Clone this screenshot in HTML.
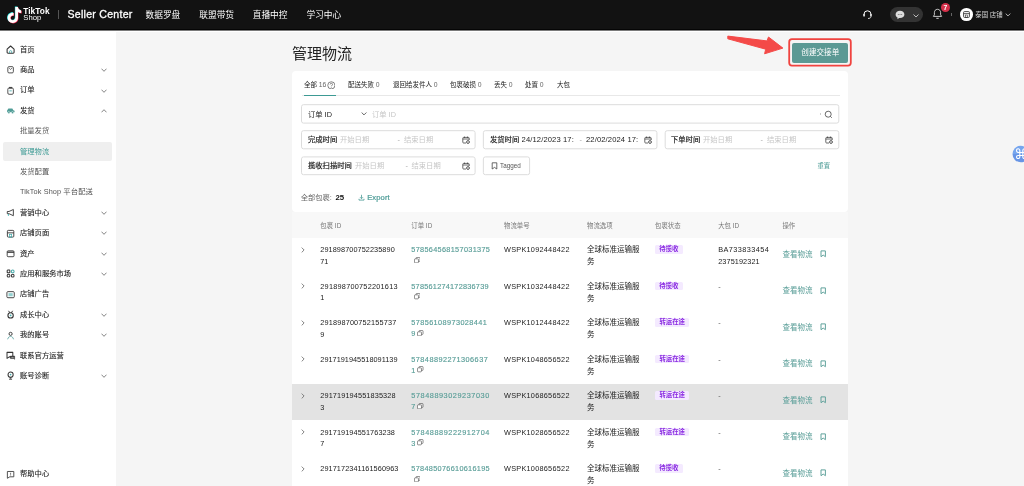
<!DOCTYPE html>
<html lang="zh">
<head>
<meta charset="utf-8">
<title>管理物流</title>
<style>
*{box-sizing:border-box;margin:0;padding:0}
html,body{width:1024px;height:486px;overflow:hidden;background:#f5f5f5}
body{font-family:"Liberation Sans","Noto Sans CJK SC",sans-serif;color:#222;position:relative;font-size:7.3px;line-height:1}
.abs{position:absolute;white-space:nowrap}
#app{position:absolute;left:0;top:0;width:1024px;height:486px;overflow:hidden;will-change:transform}
#hdr{position:absolute;left:0;top:0;width:1024px;height:30px;background:#121212;border-bottom:1px solid #050505}
#hdrsh{position:absolute;left:0;top:30px;width:1024px;height:2px;background:#fff;border-top:1px solid #7a7a7a}
#side{position:absolute;left:0;top:30px;width:116px;height:456px;background:#fff}
.nav{position:absolute;top:0.5px;height:30px;line-height:29px;color:#fff;font-size:8.7px;white-space:nowrap}
.mi{position:absolute;left:20px;height:12px;line-height:12px;font-size:7.3px;color:#1a1a1a;white-space:nowrap;-webkit-text-stroke:.1px #1a1a1a}
.mi.sub{color:#555;-webkit-text-stroke:0}
.ico{position:absolute;left:6.4px;width:9.2px;height:9.2px}
.chev{position:absolute;left:100.5px;width:6px;height:4px}
#card{position:absolute;left:292px;top:71px;width:556px;height:141px;background:#fff;border-radius:4px}
.tab{position:absolute;top:79px;height:12px;line-height:12px;font-size:6.5px;color:#222;white-space:nowrap}
.tab i{font-style:normal;color:#666;font-size:6.8px}
.box{position:absolute;height:19px;border:1px solid transparent}
.lbl{position:absolute;top:0;height:17px;line-height:17px;font-size:7.3px;white-space:nowrap;color:#222}
.ph{color:#c6c6c6}
.th{position:absolute;top:220px;height:12px;line-height:12px;font-size:6.4px;color:#777;white-space:nowrap}
.row{position:absolute;left:292px;width:556px;background:#fff}
.row.hl{background:#e3e3e3}
.c{position:absolute;font-size:7.3px;line-height:11.7px;color:#222;white-space:nowrap}
.c span{display:inline-block}
.lnk{color:#5a9e98}
.tag{position:absolute;height:8.6px;line-height:8.6px;border-radius:1.5px;background:#f4eaff;color:#8a2be2;font-size:6.4px;font-weight:700;text-align:center;white-space:nowrap}
</style>
</head>
<body>
<div id="app">
<div id="side"></div>
<div id="hdr"></div>
<div id="hdrsh"></div>
<!-- header -->
<svg class="abs" style="left:6px;top:5.700px" width="17" height="19" viewBox="0 0 17 19"><path d="M9.3 1h2.6c.2 1.9 1.4 3.2 3.3 3.4v2.700c-1.200 0-2.300-.4-3.200-1v5.700c0 3-2.400 5.200-5.200 5.200s-5.200-2.300-5.200-5.200 2.600-5.500 5.900-5.100v2.800c-1.600-.4-3.100.7-3.100 2.300 0 1.400 1.100 2.400 2.400 2.400s2.500-1 2.500-2.600z" fill="#25f4ee" transform="translate(-.45,-.4)"/><path d="M9.3 1h2.6c.2 1.9 1.4 3.2 3.3 3.4v2.700c-1.200 0-2.300-.4-3.200-1v5.700c0 3-2.400 5.200-5.200 5.200s-5.200-2.300-5.200-5.200 2.600-5.500 5.900-5.100v2.800c-1.600-.4-3.100.7-3.100 2.300 0 1.400 1.100 2.400 2.400 2.400s2.500-1 2.500-2.600z" fill="#fe2c55" transform="translate(.45,.4)"/><path d="M9.3 1h2.6c.2 1.9 1.4 3.2 3.3 3.4v2.700c-1.200 0-2.300-.4-3.200-1v5.700c0 3-2.400 5.200-5.200 5.200s-5.200-2.300-5.200-5.200 2.600-5.500 5.900-5.100v2.800c-1.600-.4-3.100.7-3.100 2.300 0 1.400 1.100 2.400 2.400 2.400s2.500-1 2.500-2.600z" fill="#fff"/></svg>
<div class="abs" style="left:23.300px;top:7.100px;font-size:8.300px;font-weight:700;color:#fff;line-height:8px;letter-spacing:.05px">TikTok</div>
<div class="abs" style="left:23.300px;top:14.300px;font-size:7.700px;color:#fff;line-height:8px">Shop</div>
<div class="abs" style="left:58px;top:10px;width:1px;height:9px;background:#555"></div>
<div class="nav" style="left:67.500px;top:-.5px;font-size:10.600px;letter-spacing:.25px;-webkit-text-stroke:.3px #fff">Seller Center</div>
<div class="nav" style="left:145.5px">数据罗盘</div>
<div class="nav" style="left:199.3px">联盟带货</div>
<div class="nav" style="left:252.7px">直播中控</div>
<div class="nav" style="left:306.4px">学习中心</div>
<!-- header right -->
<svg class="abs" style="left:862px;top:9px" width="11" height="11" viewBox="0 0 11 11"><path d="M2 6.200V5.300a3.500 3.500 0 0 1 7 0v.9" fill="none" stroke="#fff" stroke-width="1"/><rect x="1.300" y="5" width="1.500" height="2.600" rx=".7" fill="#fff"/><rect x="8.200" y="5" width="1.500" height="2.600" rx=".7" fill="#fff"/><path d="M9 7.500c0 1.300-1.300 2-3 2" fill="none" stroke="#fff" stroke-width=".8"/></svg>
<div class="abs" style="left:890px;top:7px;width:32.500px;height:15px;border-radius:7.500px;background:#333"></div>
<svg class="abs" style="left:894.500px;top:9.500px" width="10" height="10" viewBox="0 0 10 10"><path d="M5 .8c2.500 0 4.400 1.600 4.400 3.600S7.500 8 5 8c-.3 0-.6 0-.9-.1L2.500 9.200V7.400C1.300 6.700.6 5.600.6 4.400.6 2.400 2.500.8 5 .8z" fill="#ddd"/><circle cx="3.300" cy="4.400" r=".5" fill="#666"/><circle cx="5" cy="4.400" r=".5" fill="#666"/><circle cx="6.700" cy="4.400" r=".5" fill="#666"/></svg>
<svg class="abs" style="left:912.500px;top:13.500px" width="6" height="4" viewBox="0 0 6 4"><path d="M.5.500 3 3 5.500.5" fill="none" stroke="#ddd" stroke-width=".8"/></svg>
<svg class="abs" style="left:932px;top:8px" width="11" height="12" viewBox="0 0 11 12"><path d="M5.500 1.300c2 0 3.100 1.500 3.100 3.300v2.200l1 1.600H1.400l1-1.600V4.600c0-1.800 1.100-3.300 3.100-3.300z" fill="none" stroke="#e6e6e6" stroke-width=".85" stroke-linejoin="round"/><path d="M4.300 10.300h2.400" stroke="#e6e6e6" stroke-width=".9"/></svg>
<div class="abs" style="left:940.800px;top:2.900px;width:9.200px;height:9.200px;border-radius:4.600px;background:#d4304a;color:#fff;font-size:6.800px;font-weight:700;line-height:9.200px;text-align:center">7</div>
<div class="abs" style="left:951px;top:12.500px;width:1px;height:3px;background:#666"></div>
<div class="abs" style="left:960px;top:8px;width:12.500px;height:12.500px;border-radius:6.300px;background:#fff"></div>
<svg class="abs" style="left:962.700px;top:10.700px" width="7" height="7" viewBox="0 0 7 7"><rect x=".6" y=".6" width="5.800" height="5.800" rx=".8" fill="none" stroke="#333" stroke-width=".9"/><path d="M.6 2.600h5.800" stroke="#333" stroke-width=".8"/><rect x="2.500" y="4" width="2" height="2.400" fill="none" stroke="#333" stroke-width=".6"/></svg>
<div class="abs" style="left:975.300px;top:9px;height:11px;line-height:11px;font-size:6.400px;color:#d4d4d4">泰国 店铺</div>
<svg class="abs" style="left:1005px;top:13px" width="6" height="4" viewBox="0 0 6 4"><path d="M.7.600 3 2.900 5.300.6" fill="none" stroke="#ddd" stroke-width=".8"/></svg>
<!-- floating widget -->
<svg class="abs" style="left:1010px;top:143px" width="14" height="22" viewBox="1010 143 14 22"><defs><linearGradient id="wg" x1="0" y1="0" x2="0" y2="1"><stop offset=".5" stop-color="#76a5ee"/><stop offset=".5" stop-color="#6795e6"/></linearGradient></defs><circle cx="1020.750" cy="154.050" r="8.250" fill="url(#wg)"/><text x="1014.300" y="158.900" font-family="DejaVu Sans, sans-serif" font-size="14" fill="#fff">&#8984;</text></svg>
<!-- title -->
<div class="abs" style="left:292px;top:43.600px;height:20px;line-height:20px;font-size:15px;color:#222">管理物流</div>
<!-- arrow + button -->
<svg class="abs" style="left:720px;top:30px" width="80" height="38" viewBox="720 30 80 38"><path d="M727.800 36.100 766.900 40.900 768.500 37 782.900 48.100 764.600 53.800 765.700 49.200 727.800 38.800z" fill="#f44a48" stroke="#f44a48" stroke-width="1" stroke-linejoin="round"/></svg>
<svg class="abs" style="left:786px;top:36px" width="68" height="33" viewBox="786 36 68 33"><rect x="789.200" y="39.100" width="61.600" height="26.500" rx="2.800" fill="none" stroke="#f0433f" stroke-width="1.800"/></svg>
<div class="abs" style="left:792.300px;top:43.300px;width:56px;height:19.300px;border-radius:2px;background:#5b9994;color:#fff;font-size:7.600px;line-height:19.300px;text-align:center">创建交接单</div>
<!-- card -->
<div id="card"></div>
<div class="abs" style="left:301.500px;top:95.300px;width:538px;height:1px;background:#e8e8e8"></div>
<div class="abs" style="left:304px;top:94.700px;width:31.500px;height:1.200px;background:#3d9a94"></div>
<div class="tab" style="left:304px">全部 <i>16</i></div>
<svg class="abs" style="left:326.800px;top:80.700px" width="8.700" height="8.700" viewBox="0 0 8 8"><circle cx="4" cy="4" r="3.300" fill="none" stroke="#444" stroke-width=".6"/><path d="M2.900 3.200c0-1.500 2.200-1.500 2.200 0 0 .8-1.100.8-1.100 1.700M4 5.600v.6" fill="none" stroke="#444" stroke-width=".6"/></svg>
<div class="tab" style="left:348px">配送失败 <i>0</i></div>
<div class="tab" style="left:393px">退回给发件人 <i>0</i></div>
<div class="tab" style="left:450px">包裹破损 <i>0</i></div>
<div class="tab" style="left:494px">丢失 <i>0</i></div>
<div class="tab" style="left:525px">处置 <i>0</i></div>
<div class="tab" style="left:557px">大包</div>
<!-- search -->
<svg class="abs" style="left:0;top:0" width="1024" height="486" viewBox="0 0 1024 486"><g fill="#fff" stroke="#dcdcdc" stroke-width="1"><rect x="301.50" y="104.70" width="537.30" height="18.40" rx="2"/><rect x="301.50" y="130.70" width="173.60" height="18.10" rx="2"/><rect x="483.35" y="130.70" width="173.60" height="18.10" rx="2"/><rect x="665.20" y="130.70" width="173.60" height="18.10" rx="2"/><rect x="301.50" y="156.90" width="173.60" height="17.80" rx="2"/><rect x="483.35" y="156.90" width="46.25" height="17.80" rx="2"/></g></svg>
<div class="box" style="left:301px;top:104px;width:538px;height:20px">
  <div class="lbl" style="left:6px;height:18px;line-height:20px">订单 ID</div>
  <svg class="abs" style="left:58.500px;top:7px" width="6" height="4" viewBox="0 0 6 4"><path d="M.6.500 3 2.900 5.400.5" fill="none" stroke="#444" stroke-width=".8"/></svg>
  <div class="lbl ph" style="left:70px;height:18px;line-height:20px">订单 ID</div>
  <div class="abs" style="left:517.500px;top:7.500px;width:1px;height:2px;background:#ccc"></div>
  <svg class="abs" style="left:521.500px;top:4.500px" width="9" height="9" viewBox="0 0 9 9"><circle cx="4.200" cy="4.200" r="3" fill="none" stroke="#444" stroke-width=".8"/><path d="M6.400 6.400 7.800 7.800" stroke="#444" stroke-width=".8"/></svg>
</div>
<!-- filters -->
<div class="box" style="left:301px;top:130px;width:175px">
  <div class="lbl" style="left:6px;-webkit-text-stroke:.2px #222">完成时间</div>
  <div class="lbl ph" style="left:38px">开始日期</div>
  <div class="lbl" style="left:95.5px;color:#aaa">-</div>
  <div class="lbl ph" style="left:102px;">结束日期</div>
  <svg class="abs" style="left:159.5px;top:5px" width="8" height="8" viewBox="0 0 8 8"><path d="M4 7H1.600a.8.8 0 0 1-.8-.8V2.200a.8.8 0 0 1 .8-.8h4.800a.8.8 0 0 1 .8.800V4" fill="none" stroke="#444" stroke-width=".8"/><path d="M.8 3h6.400M2.500.6v1.400M5.500.6v1.400" stroke="#444" stroke-width=".8"/><circle cx="6" cy="6" r="1.400" fill="none" stroke="#444" stroke-width=".9"/></svg>
</div>
<div class="box" style="left:483px;top:130px;width:174px">
  <div class="lbl" style="left:6px;-webkit-text-stroke:.2px #222">发货时间</div>
  <div class="lbl" style="left:37.6px;width:52.300px;overflow:hidden;font-size:7.600px;letter-spacing:.12px">24/12/2023 17:00</div>
  <div class="lbl" style="left:95.5px;color:#aaa">-</div>
  <div class="lbl" style="left:102px;font-size:7.600px;letter-spacing:.12px">22/02/2024 17:</div>
  <svg class="abs" style="left:159.5px;top:5px" width="8" height="8" viewBox="0 0 8 8"><path d="M4 7H1.600a.8.8 0 0 1-.8-.8V2.200a.8.8 0 0 1 .8-.8h4.800a.8.8 0 0 1 .8.800V4" fill="none" stroke="#444" stroke-width=".8"/><path d="M.8 3h6.400M2.500.6v1.400M5.500.6v1.400" stroke="#444" stroke-width=".8"/><circle cx="6" cy="6" r="1.400" fill="none" stroke="#444" stroke-width=".9"/></svg>
</div>
<div class="box" style="left:664px;top:130px;width:175px">
  <div class="lbl" style="left:6px;-webkit-text-stroke:.2px #222">下单时间</div>
  <div class="lbl ph" style="left:38px">开始日期</div>
  <div class="lbl" style="left:95.5px;color:#aaa">-</div>
  <div class="lbl ph" style="left:102px;">结束日期</div>
  <svg class="abs" style="left:159.5px;top:5px" width="8" height="8" viewBox="0 0 8 8"><path d="M4 7H1.600a.8.8 0 0 1-.8-.8V2.200a.8.8 0 0 1 .8-.8h4.800a.8.8 0 0 1 .8.800V4" fill="none" stroke="#444" stroke-width=".8"/><path d="M.8 3h6.400M2.500.6v1.400M5.500.6v1.400" stroke="#444" stroke-width=".8"/><circle cx="6" cy="6" r="1.400" fill="none" stroke="#444" stroke-width=".9"/></svg>
</div>
<div class="box" style="left:301px;top:156px;width:175px">
  <div class="lbl" style="left:6px;-webkit-text-stroke:.2px #222">揽收扫描时间</div>
  <div class="lbl ph" style="left:53px">开始日期</div>
  <div class="lbl" style="left:103.5px;color:#aaa">-</div>
  <div class="lbl ph" style="left:109.5px;">结束日期</div>
  <svg class="abs" style="left:159.5px;top:5px" width="8" height="8" viewBox="0 0 8 8"><path d="M4 7H1.600a.8.8 0 0 1-.8-.8V2.200a.8.8 0 0 1 .8-.8h4.800a.8.8 0 0 1 .8.800V4" fill="none" stroke="#444" stroke-width=".8"/><path d="M.8 3h6.400M2.500.6v1.400M5.500.6v1.400" stroke="#444" stroke-width=".8"/><circle cx="6" cy="6" r="1.400" fill="none" stroke="#444" stroke-width=".9"/></svg>
</div>
<div class="box" style="left:483px;top:156px;width:47px;height:19.500px">
  <svg class="abs" style="left:6.500px;top:5px" width="7" height="8" viewBox="0 0 7 8"><path d="M1.200.8h4.600v6.200L3.500 5.400 1.200 7z" fill="none" stroke="#444" stroke-width=".8" stroke-linejoin="round"/></svg>
  <div class="lbl" style="left:16px;font-size:6.300px;color:#555">Tagged</div>
</div>
<div class="abs" style="left:817.500px;top:160px;height:12px;line-height:12px;font-size:6.300px;color:#4a9a95">重置</div>
<div class="abs" style="left:300.700px;top:192px;height:12px;line-height:12px;font-size:7.300px;color:#666">全部包裹: <b style="color:#111;font-size:7.800px;margin-left:1.500px">25</b></div>
<svg class="abs" style="left:357.500px;top:194.300px" width="7" height="7" viewBox="0 0 7 7"><path d="M3.500.8v3.600M2 3.200l1.500 1.500L5 3.200M1 4.800v1.300h5V4.800" fill="none" stroke="#4a9a95" stroke-width=".8"/></svg>
<div class="abs" style="left:367.200px;top:192px;height:12px;line-height:12px;font-size:7.600px;letter-spacing:.1px;color:#4a9a95;-webkit-text-stroke:.2px #4a9a95">Export</div>
<!-- table -->
<div class="abs" style="left:292px;top:212px;width:556px;height:26px;background:#f8f8f8"></div>
<div class="th" style="left:320.3px">包裹 ID</div>
<div class="th" style="left:411.3px">订单 ID</div>
<div class="th" style="left:504px">物流单号</div>
<div class="th" style="left:587.1px">物流选项</div>
<div class="th" style="left:655.1px">包裹状态</div>
<div class="th" style="left:718.2px">大包 ID</div>
<div class="th" style="left:782.4px">操作</div>
<div class="row" style="top:238px;height:36px"></div>
<svg class="abs" style="left:300.500px;top:246.9px" width="4" height="6" viewBox="0 0 4 6"><path d="M.7.600 3.100 3 .7 5.400" fill="none" stroke="#666" stroke-width=".8"/></svg><div class="c" style="left:320.300px;top:244.12px"><span style="letter-spacing:0.080px;">291898700752235890</span><br>71</div><div class="c lnk" style="left:411.300px;top:244.12px;line-height:11.300px;-webkit-text-stroke:.15px #5a9e98"><span style="letter-spacing:0.324px;">578564568157031375</span><br><svg style="display:inline-block;vertical-align:.3px;margin-left:2.5px" width="6.500" height="6.500" viewBox="0 0 7 7"><rect x=".5" y="2" width="4.300" height="4.300" rx=".8" fill="#fff" stroke="#555" stroke-width=".7"/><path d="M2.200 2V1.300a.8.8 0 0 1 .8-.8h2.700a.8.8 0 0 1 .8.800V4a.8.8 0 0 1-.8.800H4.800" fill="none" stroke="#555" stroke-width=".7"/></svg></div><div class="c" style="left:504px;top:244.12px"><span style="letter-spacing:0.259px;">WSPK1092448422</span></div><div class="c" style="left:587.100px;top:244.12px;font-size:7.500px;line-height:12px">全球标准运输服<br>务</div><div class="tag" style="left:655.100px;top:245.0px;width:27.7px">待揽收</div><div class="c" style="left:718.200px;top:244.12px;line-height:12px"><span style="letter-spacing:0.430px;">BA733833454</span><br><span style="letter-spacing:0.091px;">2375192321</span></div><div class="c lnk" style="left:782.500px;top:248.70px;font-size:7.500px">查看物流</div><svg class="abs" style="left:819.8px;top:250.1px" width="7" height="8" viewBox="0 0 7 8"><path d="M1 .9h4.400v5.800L3.200 5.100 1 6.700z" fill="none" stroke="#5a9e98" stroke-width=".95" stroke-linejoin="round"/></svg>
<div class="row" style="top:274px;height:37px"></div>
<svg class="abs" style="left:300.500px;top:283.4px" width="4" height="6" viewBox="0 0 4 6"><path d="M.7.600 3.100 3 .7 5.400" fill="none" stroke="#666" stroke-width=".8"/></svg><div class="c" style="left:320.300px;top:280.62px"><span style="letter-spacing:0.247px;">291898700752201613</span><br>1</div><div class="c lnk" style="left:411.300px;top:280.62px;line-height:11.300px;-webkit-text-stroke:.15px #5a9e98"><span style="letter-spacing:0.247px;">578561274172836739</span><br><svg style="display:inline-block;vertical-align:.3px;margin-left:2.5px" width="6.500" height="6.500" viewBox="0 0 7 7"><rect x=".5" y="2" width="4.300" height="4.300" rx=".8" fill="#fff" stroke="#555" stroke-width=".7"/><path d="M2.200 2V1.300a.8.8 0 0 1 .8-.8h2.700a.8.8 0 0 1 .8.800V4a.8.8 0 0 1-.8.800H4.800" fill="none" stroke="#555" stroke-width=".7"/></svg></div><div class="c" style="left:504px;top:280.62px"><span style="letter-spacing:0.259px;">WSPK1032448422</span></div><div class="c" style="left:587.100px;top:280.62px;font-size:7.500px;line-height:12px">全球标准运输服<br>务</div><div class="tag" style="left:655.100px;top:281.5px;width:27.7px">待揽收</div><div class="c" style="left:718.200px;top:280.62px;color:#555">-</div><div class="c lnk" style="left:782.500px;top:285.20px;font-size:7.500px">查看物流</div><svg class="abs" style="left:819.8px;top:286.6px" width="7" height="8" viewBox="0 0 7 8"><path d="M1 .9h4.400v5.800L3.200 5.100 1 6.700z" fill="none" stroke="#5a9e98" stroke-width=".95" stroke-linejoin="round"/></svg>
<div class="row" style="top:311px;height:36px"></div>
<svg class="abs" style="left:300.500px;top:319.9px" width="4" height="6" viewBox="0 0 4 6"><path d="M.7.600 3.100 3 .7 5.400" fill="none" stroke="#666" stroke-width=".8"/></svg><div class="c" style="left:320.300px;top:317.12px"><span style="letter-spacing:0.169px;">291898700752155737</span><br>9</div><div class="c lnk" style="left:411.300px;top:317.12px;line-height:11.300px;-webkit-text-stroke:.15px #5a9e98"><span style="letter-spacing:0.406px;">57856108973028441</span><br>9<svg style="display:inline-block;vertical-align:.3px;margin-left:2px" width="6.500" height="6.500" viewBox="0 0 7 7"><rect x=".5" y="2" width="4.300" height="4.300" rx=".8" fill="#fff" stroke="#555" stroke-width=".7"/><path d="M2.200 2V1.300a.8.8 0 0 1 .8-.8h2.700a.8.8 0 0 1 .8.800V4a.8.8 0 0 1-.8.800H4.800" fill="none" stroke="#555" stroke-width=".7"/></svg></div><div class="c" style="left:504px;top:317.12px"><span style="letter-spacing:0.259px;">WSPK1012448422</span></div><div class="c" style="left:587.100px;top:317.12px;font-size:7.500px;line-height:12px">全球标准运输服<br>务</div><div class="tag" style="left:655.100px;top:318.0px;width:34.2px">转运在途</div><div class="c" style="left:718.200px;top:317.12px;color:#555">-</div><div class="c lnk" style="left:782.500px;top:321.70px;font-size:7.500px">查看物流</div><svg class="abs" style="left:819.8px;top:323.1px" width="7" height="8" viewBox="0 0 7 8"><path d="M1 .9h4.400v5.800L3.200 5.100 1 6.700z" fill="none" stroke="#5a9e98" stroke-width=".95" stroke-linejoin="round"/></svg>
<div class="row" style="top:347px;height:37px"></div>
<svg class="abs" style="left:300.500px;top:356.4px" width="4" height="6" viewBox="0 0 4 6"><path d="M.7.600 3.100 3 .7 5.400" fill="none" stroke="#666" stroke-width=".8"/></svg><div class="c" style="left:320.300px;top:353.62px"><span style="letter-spacing:0.033px;">2917191945518091139</span></div><div class="c lnk" style="left:411.300px;top:353.62px;line-height:11.300px;-webkit-text-stroke:.15px #5a9e98"><span style="letter-spacing:0.465px;">57848892271306637</span><br>1<svg style="display:inline-block;vertical-align:.3px;margin-left:2px" width="6.500" height="6.500" viewBox="0 0 7 7"><rect x=".5" y="2" width="4.300" height="4.300" rx=".8" fill="#fff" stroke="#555" stroke-width=".7"/><path d="M2.200 2V1.300a.8.8 0 0 1 .8-.8h2.700a.8.8 0 0 1 .8.800V4a.8.8 0 0 1-.8.800H4.800" fill="none" stroke="#555" stroke-width=".7"/></svg></div><div class="c" style="left:504px;top:353.62px"><span style="letter-spacing:0.259px;">WSPK1048656522</span></div><div class="c" style="left:587.100px;top:353.62px;font-size:7.500px;line-height:12px">全球标准运输服<br>务</div><div class="tag" style="left:655.100px;top:354.5px;width:34.2px">转运在途</div><div class="c" style="left:718.200px;top:353.62px;color:#555">-</div><div class="c lnk" style="left:782.500px;top:358.20px;font-size:7.500px">查看物流</div><svg class="abs" style="left:819.8px;top:359.6px" width="7" height="8" viewBox="0 0 7 8"><path d="M1 .9h4.400v5.800L3.200 5.100 1 6.700z" fill="none" stroke="#5a9e98" stroke-width=".95" stroke-linejoin="round"/></svg>
<div class="row hl" style="top:384px;height:36px"></div>
<svg class="abs" style="left:300.500px;top:392.9px" width="4" height="6" viewBox="0 0 4 6"><path d="M.7.600 3.100 3 .7 5.400" fill="none" stroke="#666" stroke-width=".8"/></svg><div class="c" style="left:320.300px;top:390.12px"><span style="letter-spacing:0.130px;">291719194551835328</span><br>3</div><div class="c lnk" style="left:411.300px;top:390.12px;line-height:11.300px;-webkit-text-stroke:.15px #5a9e98"><span style="letter-spacing:0.559px;">57848893029237030</span><br>7<svg style="display:inline-block;vertical-align:.3px;margin-left:2px" width="6.500" height="6.500" viewBox="0 0 7 7"><rect x=".5" y="2" width="4.300" height="4.300" rx=".8" fill="#fff" stroke="#555" stroke-width=".7"/><path d="M2.200 2V1.300a.8.8 0 0 1 .8-.8h2.700a.8.8 0 0 1 .8.800V4a.8.8 0 0 1-.8.800H4.800" fill="none" stroke="#555" stroke-width=".7"/></svg></div><div class="c" style="left:504px;top:390.12px"><span style="letter-spacing:0.259px;">WSPK1068656522</span></div><div class="c" style="left:587.100px;top:390.12px;font-size:7.500px;line-height:12px">全球标准运输服<br>务</div><div class="tag" style="left:655.100px;top:391.0px;width:34.2px">转运在途</div><div class="c" style="left:718.200px;top:390.12px;color:#555">-</div><div class="c lnk" style="left:782.500px;top:394.70px;font-size:7.500px">查看物流</div><svg class="abs" style="left:819.8px;top:396.1px" width="7" height="8" viewBox="0 0 7 8"><path d="M1 .9h4.400v5.800L3.200 5.100 1 6.700z" fill="none" stroke="#5a9e98" stroke-width=".95" stroke-linejoin="round"/></svg>
<div class="row" style="top:420px;height:37px"></div>
<svg class="abs" style="left:300.500px;top:429.4px" width="4" height="6" viewBox="0 0 4 6"><path d="M.7.600 3.100 3 .7 5.400" fill="none" stroke="#666" stroke-width=".8"/></svg><div class="c" style="left:320.300px;top:426.62px"><span style="letter-spacing:0.091px;">291719194551763238</span><br>7</div><div class="c lnk" style="left:411.300px;top:426.62px;line-height:11.300px;-webkit-text-stroke:.15px #5a9e98"><span style="letter-spacing:0.571px;">57848889222912704</span><br>3<svg style="display:inline-block;vertical-align:.3px;margin-left:2px" width="6.500" height="6.500" viewBox="0 0 7 7"><rect x=".5" y="2" width="4.300" height="4.300" rx=".8" fill="#fff" stroke="#555" stroke-width=".7"/><path d="M2.200 2V1.300a.8.8 0 0 1 .8-.8h2.700a.8.8 0 0 1 .8.800V4a.8.8 0 0 1-.8.800H4.800" fill="none" stroke="#555" stroke-width=".7"/></svg></div><div class="c" style="left:504px;top:426.62px"><span style="letter-spacing:0.259px;">WSPK1028656522</span></div><div class="c" style="left:587.100px;top:426.62px;font-size:7.500px;line-height:12px">全球标准运输服<br>务</div><div class="tag" style="left:655.100px;top:427.5px;width:34.2px">转运在途</div><div class="c" style="left:718.200px;top:426.62px;color:#555">-</div><div class="c lnk" style="left:782.500px;top:431.20px;font-size:7.500px">查看物流</div><svg class="abs" style="left:819.8px;top:432.6px" width="7" height="8" viewBox="0 0 7 8"><path d="M1 .9h4.400v5.800L3.200 5.100 1 6.700z" fill="none" stroke="#5a9e98" stroke-width=".95" stroke-linejoin="round"/></svg>
<div class="row" style="top:457px;height:36px"></div>
<svg class="abs" style="left:300.500px;top:465.9px" width="4" height="6" viewBox="0 0 4 6"><path d="M.7.600 3.100 3 .7 5.400" fill="none" stroke="#666" stroke-width=".8"/></svg><div class="c" style="left:320.300px;top:463.12px"><span style="letter-spacing:0.085px;">2917172341161560963</span></div><div class="c lnk" style="left:411.300px;top:463.12px;line-height:11.300px;-webkit-text-stroke:.15px #5a9e98"><span style="letter-spacing:0.313px;">578485076610616195</span><br><svg style="display:inline-block;vertical-align:.3px;margin-left:2.5px" width="6.500" height="6.500" viewBox="0 0 7 7"><rect x=".5" y="2" width="4.300" height="4.300" rx=".8" fill="#fff" stroke="#555" stroke-width=".7"/><path d="M2.200 2V1.300a.8.8 0 0 1 .8-.8h2.700a.8.8 0 0 1 .8.800V4a.8.8 0 0 1-.8.800H4.800" fill="none" stroke="#555" stroke-width=".7"/></svg></div><div class="c" style="left:504px;top:463.12px"><span style="letter-spacing:0.259px;">WSPK1008656522</span></div><div class="c" style="left:587.100px;top:463.12px;font-size:7.500px;line-height:12px">全球标准运输服<br>务</div><div class="tag" style="left:655.100px;top:464.0px;width:27.7px">待揽收</div><div class="c" style="left:718.200px;top:463.12px;color:#555">-</div><div class="c lnk" style="left:782.500px;top:467.70px;font-size:7.500px">查看物流</div><svg class="abs" style="left:819.8px;top:469.1px" width="7" height="8" viewBox="0 0 7 8"><path d="M1 .9h4.400v5.800L3.200 5.100 1 6.700z" fill="none" stroke="#5a9e98" stroke-width=".95" stroke-linejoin="round"/></svg>
<!-- sidebar -->
<div class="abs" style="left:2.800px;top:142.200px;width:109px;height:18.600px;background:#efefef;border-radius:2px"></div>
<div class="mi" style="top:43.5px">首页</div>
<svg class="ico" style="top:44.9px" viewBox="0 0 10 10"><path d="M1.200 4.500 5 1.100l3.800 3.400v3.400a1 1 0 0 1-1 1H2.200a1 1 0 0 1-1-1z" fill="none" stroke="#333" stroke-width="1.150" stroke-linejoin="round"/><path d="M3.800 8.700V7.300a1.200 1.200 0 0 1 2.400 0v1.400" fill="none" stroke="#4aa" stroke-width=".9"/></svg>
<div class="mi" style="top:63.9px">商品</div>
<svg class="ico" style="top:65.3px" viewBox="0 0 10 10"><rect x="2" y="1.800" width="6" height="6.800" rx="1.300" fill="none" stroke="#444" stroke-width="1"/><path d="M3.400 3.300 5 4.900l1.600-1.600" fill="none" stroke="#444" stroke-width=".85"/></svg>
<svg class="chev" style="top:68.2px" viewBox="0 0 6 4"><path d="M.5.7 3 3.300 5.500.7" fill="none" stroke="#666" stroke-width=".8"/></svg>
<div class="mi" style="top:84.3px">订单</div>
<svg class="ico" style="top:85.7px" viewBox="0 0 10 10"><rect x="2" y="2.200" width="6" height="6.800" rx="1.300" fill="none" stroke="#444" stroke-width="1"/><path d="M3.300 1h3.400v1.700H3.300z" fill="#444"/><path d="M3.700 5.300h2.600" stroke="#4aa" stroke-width=".9"/></svg>
<svg class="chev" style="top:88.6px" viewBox="0 0 6 4"><path d="M.5.7 3 3.300 5.500.7" fill="none" stroke="#666" stroke-width=".8"/></svg>
<div class="mi" style="top:104.7px">发货</div>
<svg class="ico" style="top:106.1px" viewBox="0 0 10 10"><path d="M1.200 6.900V5l1.400-2.200h4.300l1.100 1.700 1.300.600v1.800z" fill="#509d97"/><circle cx="3.100" cy="7.200" r="1.200" fill="#509d97" stroke="#fff" stroke-width=".45"/><circle cx="7.100" cy="7.200" r="1.200" fill="#509d97" stroke="#fff" stroke-width=".45"/></svg>
<svg class="chev" style="top:109.0px" viewBox="0 0 6 4"><path d="M.5 3.300 3 .7 5.500 3.300" fill="none" stroke="#666" stroke-width=".8"/></svg>
<div class="mi sub" style="top:125.1px">批量发货</div>
<div class="mi sub" style="top:145.5px;color:#3d9a94">管理物流</div>
<div class="mi sub" style="top:165.9px">发货配置</div>
<div class="mi sub" style="top:186.3px;letter-spacing:.12px">TikTok Shop 平台配送</div>
<div class="mi" style="top:206.7px">营销中心</div>
<svg class="ico" style="top:208.1px" viewBox="0 0 10 10"><path d="M1.400 3.800h1.900L8 1.600v6.800L3.300 6.200H1.400z" fill="none" stroke="#3a3a3a" stroke-width="1" stroke-linejoin="round"/><path d="M2.600 6.600v1.900" stroke="#3aa" stroke-width="1"/></svg>
<svg class="chev" style="top:211.0px" viewBox="0 0 6 4"><path d="M.5.7 3 3.300 5.500.7" fill="none" stroke="#666" stroke-width=".8"/></svg>
<div class="mi" style="top:227.1px">店铺页面</div>
<svg class="ico" style="top:228.5px" viewBox="0 0 10 10"><rect x="1.500" y="1.500" width="7" height="7.300" rx="1" fill="none" stroke="#3a3a3a" stroke-width="1"/><path d="M1.500 4.200h7" stroke="#3a3a3a" stroke-width="1"/><rect x="3.800" y="6" width="2.400" height="2.800" fill="none" stroke="#3aa" stroke-width=".7"/></svg>
<svg class="chev" style="top:231.4px" viewBox="0 0 6 4"><path d="M.5.7 3 3.300 5.500.7" fill="none" stroke="#666" stroke-width=".8"/></svg>
<div class="mi" style="top:247.5px">资产</div>
<svg class="ico" style="top:248.9px" viewBox="0 0 10 10"><rect x="1.300" y="2" width="7.400" height="6.400" rx="1" fill="none" stroke="#3a3a3a" stroke-width="1"/><path d="M1.300 3.500h7.400" stroke="#3a3a3a" stroke-width="1.400"/></svg>
<svg class="chev" style="top:251.8px" viewBox="0 0 6 4"><path d="M.5.7 3 3.300 5.500.7" fill="none" stroke="#666" stroke-width=".8"/></svg>
<div class="mi" style="top:267.9px">应用和服务市场</div>
<svg class="ico" style="top:269.3px" viewBox="0 0 10 10"><rect x="1.300" y="1.200" width="2.900" height="2.900" rx=".6" fill="none" stroke="#333" stroke-width="1.100"/><circle cx="7.300" cy="2.700" r="1.500" fill="none" stroke="#4aa" stroke-width="1.100"/><circle cx="2.750" cy="7.300" r="1.500" fill="none" stroke="#333" stroke-width="1.100"/><circle cx="7.300" cy="7.300" r="1.500" fill="none" stroke="#333" stroke-width="1.100"/></svg>
<svg class="chev" style="top:272.2px" viewBox="0 0 6 4"><path d="M.5.7 3 3.300 5.500.7" fill="none" stroke="#666" stroke-width=".8"/></svg>
<div class="mi" style="top:288.3px">店铺广告</div>
<svg class="ico" style="top:289.7px" viewBox="0 0 10 10"><rect x="1" y="1.800" width="8" height="6.600" rx="1.100" fill="none" stroke="#3a3a3a" stroke-width="1"/><rect x="2.700" y="3.400" width="4.600" height="3.400" fill="#8cc" opacity=".9"/></svg>
<div class="mi" style="top:308.7px">成长中心</div>
<svg class="ico" style="top:310.1px" viewBox="0 0 10 10"><circle cx="5" cy="5.900" r="2.900" fill="none" stroke="#333" stroke-width="1.150"/><path d="M2.800.9l1.400 2.200M7.200.9 5.800 3.100" stroke="#333" stroke-width="1.050"/><circle cx="5" cy="5.900" r="1" fill="#4aa"/></svg>
<svg class="chev" style="top:313.0px" viewBox="0 0 6 4"><path d="M.5.7 3 3.300 5.500.7" fill="none" stroke="#666" stroke-width=".8"/></svg>
<div class="mi" style="top:329.1px">我的账号</div>
<svg class="ico" style="top:330.5px" viewBox="0 0 10 10"><circle cx="5" cy="3.100" r="1.700" fill="none" stroke="#333" stroke-width="1"/><path d="M1.800 9c.6-2.200 1.800-3.100 3.200-3.100s2.600.9 3.200 3.100" fill="none" stroke="#6aabab" stroke-width="1"/></svg>
<svg class="chev" style="top:333.4px" viewBox="0 0 6 4"><path d="M.5.7 3 3.300 5.500.7" fill="none" stroke="#666" stroke-width=".8"/></svg>
<div class="mi" style="top:349.5px">联系官方运营</div>
<svg class="ico" style="top:350.9px" viewBox="0 0 10 10"><path d="M1.100 1.500h6.300v4.900H3.600L1.100 8z" fill="none" stroke="#333" stroke-width="1.100" stroke-linejoin="round"/><path d="M4.800 5.500h4.600v3.600l-1.300-.9H4.800z" fill="#333" stroke="#333" stroke-width=".5" stroke-linejoin="round"/><path d="M5.800 6.900h2.600" stroke="#fff" stroke-width=".6"/></svg>
<div class="mi" style="top:369.9px">账号诊断</div>
<svg class="ico" style="top:371.3px" viewBox="0 0 10 10"><circle cx="5" cy="4" r="2.800" fill="none" stroke="#333" stroke-width="1.100"/><path d="M5 6.800v1.500M3.400 8.900h3.200" stroke="#333" stroke-width="1.050"/><circle cx="5" cy="4" r=".9" fill="#4aa"/></svg>
<svg class="chev" style="top:374.2px" viewBox="0 0 6 4"><path d="M.5.7 3 3.300 5.500.7" fill="none" stroke="#666" stroke-width=".8"/></svg>
<div class="mi" style="top:468.1px">帮助中心</div>
<svg class="ico" style="top:469.5px" viewBox="0 0 10 10"><path d="M1.500 1.600h7v5.800H4.200L1.500 9z" fill="none" stroke="#444" stroke-width="1" stroke-linejoin="round"/><path d="M5 3v2.200M5 6v.5" stroke="#444" stroke-width=".8"/></svg>
</div>
</body>
</html>
